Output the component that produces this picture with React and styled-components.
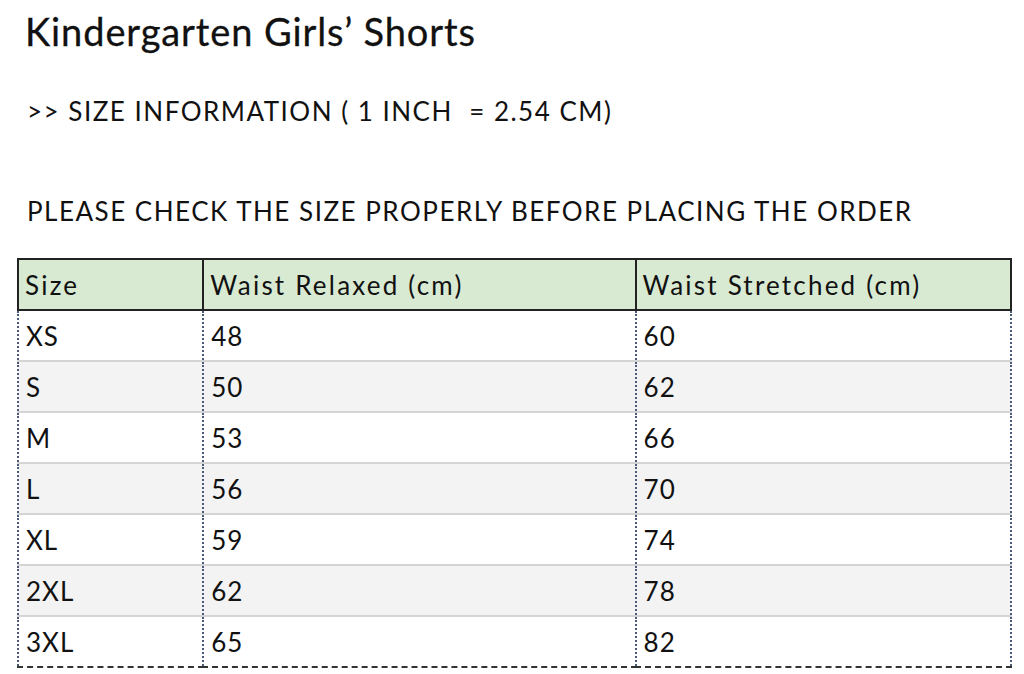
import styled, { createGlobalStyle } from "styled-components";

const GlobalStyle = createGlobalStyle`
  body {
    margin: 0;
    background: #fff;
    font-family: "Lato", "Liberation Sans", sans-serif;
    color: #111;
  }
`;

const Page = styled.div`
  padding: 8px 14px 0 17px;
  width: 1024px;
  box-sizing: border-box;
`;

const Title = styled.h1`
  margin: 0 0 0 8px;
  font-weight: 400;
  font-size: 38px;
  line-height: 46px;
  letter-spacing: 0.9px;
  -webkit-text-stroke: 0.3px #111;
`;

const Line = styled.p`
  margin: ${(p) => p.top || 0}px 0 0 10px;
  font-size: 26px;
  line-height: 34px;
  letter-spacing: 1.5px;
`;

const Table = styled.table`
  margin-top: 30px;
  width: 995px;
  border-collapse: collapse;
  font-size: 26px;
  letter-spacing: 1px;
`;

const Head = styled.th`
  background: #d9ead3;
  border: 2px solid #222;
  height: 49px;
  padding: 0 0 0 6px;
  text-align: left;
  font-weight: 400;
  letter-spacing: 2.2px;
  width: ${(p) => p.w}px;
`;

const Row = styled.tr`
  background: ${(p) => (p.alt ? "#f3f3f3" : "#fff")};
  border-bottom: ${(p) => (p.last ? "2px dashed #333" : "2px solid #d4d4d4")};
`;

const Cell = styled.td`
  height: 49px;
  padding: 0 0 0 7px;
  border-left: 2px dotted #4a5a78;
  border-right: 2px dotted #4a5a78;
`;

const rows = [
  ["XS", 48, 60],
  ["S", 50, 62],
  ["M", 53, 66],
  ["L", 56, 70],
  ["XL", 59, 74],
  ["2XL", 62, 78],
  ["3XL", 65, 82],
];

export default function App() {
  return (
    <>
      <GlobalStyle />
      <Page>
        <Title>Kindergarten Girls’ Shorts</Title>
        <Line top={40}>&gt;&gt; SIZE INFORMATION ( 1 INCH&nbsp; = 2.54 CM)</Line>
        <Line top={66}>PLEASE CHECK THE SIZE PROPERLY BEFORE PLACING THE ORDER</Line>
        <Table>
          <thead>
            <tr>
              <Head w={177}>Size</Head>
              <Head w={424}>Waist Relaxed (cm)</Head>
              <Head w={367}>Waist Stretched (cm)</Head>
            </tr>
          </thead>
          <tbody>
            {rows.map((r, i) => (
              <Row key={r[0]} alt={i % 2 === 1} last={i === rows.length - 1}>
                <Cell>{r[0]}</Cell>
                <Cell>{r[1]}</Cell>
                <Cell>{r[2]}</Cell>
              </Row>
            ))}
          </tbody>
        </Table>
      </Page>
    </>
  );
}
